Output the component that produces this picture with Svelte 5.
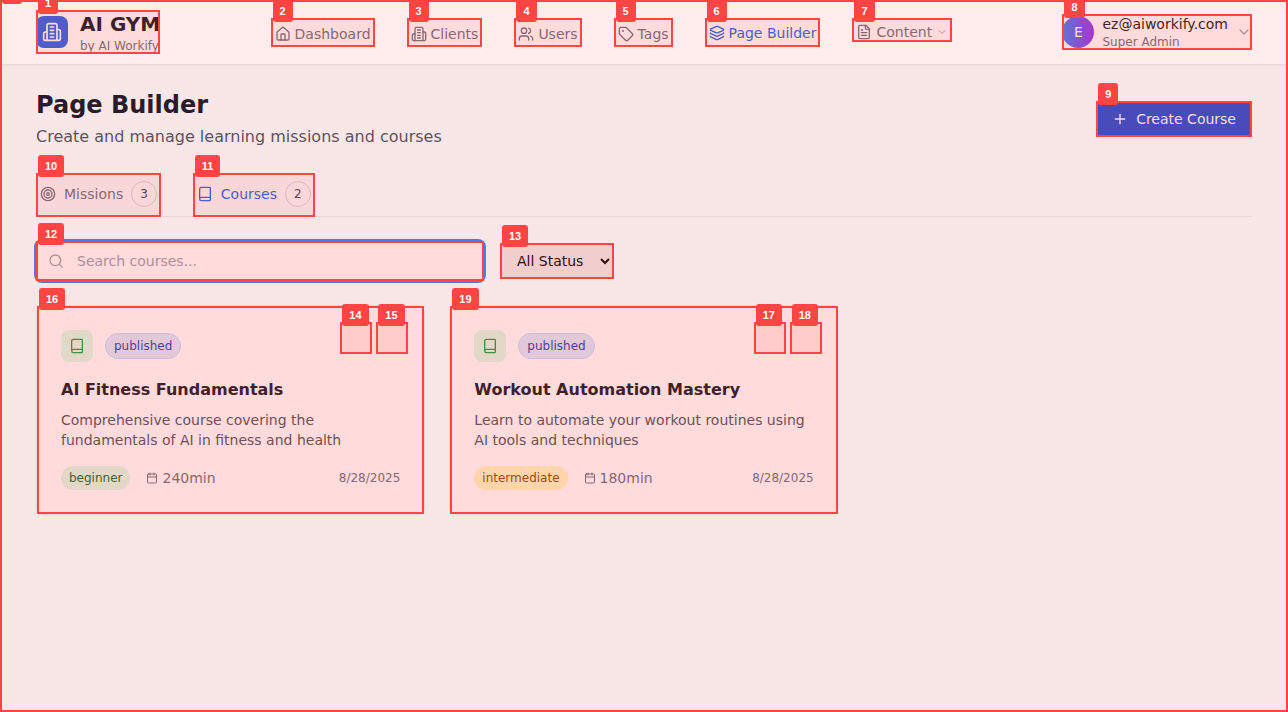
<script>
  const icons = {
    building: ['M6 22V4a2 2 0 0 1 2-2h8a2 2 0 0 1 2 2v18Z', 'M6 12H4a2 2 0 0 0-2 2v6a2 2 0 0 0 2 2h2', 'M18 9h2a2 2 0 0 1 2 2v9a2 2 0 0 1-2 2h-2', 'M10 6h4', 'M10 10h4', 'M10 14h4', 'M10 18h4'],
    home: ['M15 21v-8a1 1 0 0 0-1-1h-4a1 1 0 0 0-1 1v8', 'M3 10a2 2 0 0 1 .709-1.528l7-5.999a2 2 0 0 1 2.582 0l7 5.999A2 2 0 0 1 21 10v9a2 2 0 0 1-2 2H5a2 2 0 0 1-2-2z'],
    users: ['M16 21v-2a4 4 0 0 0-4-4H6a4 4 0 0 0-4 4v2', 'M5 7a4 4 0 1 0 8 0a4 4 0 1 0-8 0', 'M22 21v-2a4 4 0 0 0-3-3.87', 'M16 3.13a4 4 0 0 1 0 7.75'],
    tag: ['M12.586 2.586A2 2 0 0 0 11.172 2H4a2 2 0 0 0-2 2v7.172a2 2 0 0 0 .586 1.414l8.704 8.704a2.426 2.426 0 0 0 3.42 0l6.58-6.58a2.426 2.426 0 0 0 0-3.42z', 'M7 7.5a.5.5 0 1 0 1 0a.5.5 0 1 0-1 0'],
    layers: ['M12.83 2.18a2 2 0 0 0-1.66 0L2.6 6.08a1 1 0 0 0 0 1.83l8.58 3.91a2 2 0 0 0 1.66 0l8.58-3.9a1 1 0 0 0 0-1.83Z', 'M2 12a1 1 0 0 0 .58.91l8.6 3.91a2 2 0 0 0 1.65 0l8.58-3.9A1 1 0 0 0 22 12', 'M2 17a1 1 0 0 0 .58.91l8.6 3.91a2 2 0 0 0 1.65 0l8.58-3.9A1 1 0 0 0 22 17'],
    file: ['M15 2H6a2 2 0 0 0-2 2v16a2 2 0 0 0 2 2h12a2 2 0 0 0 2-2V7Z', 'M14 2v4a2 2 0 0 0 2 2h4', 'M10 9H8', 'M16 13H8', 'M16 17H8'],
    chevron: ['m6 9 6 6 6-6'],
    plus: ['M5 12h14', 'M12 5v14'],
    target: ['M2 12a10 10 0 1 0 20 0a10 10 0 1 0-20 0', 'M6 12a6 6 0 1 0 12 0a6 6 0 1 0-12 0', 'M10 12a2 2 0 1 0 4 0a2 2 0 1 0-4 0'],
    book: ['M4 19.5v-15A2.5 2.5 0 0 1 6.5 2H19a1 1 0 0 1 1 1v18a1 1 0 0 1-1 1H6.5a1 1 0 0 1 0-5H20'],
    search: ['M3 11a8 8 0 1 0 16 0a8 8 0 1 0-16 0', 'm21 21-4.3-4.3'],
    calendar: ['M8 2v4', 'M16 2v4', 'M5 4h14a2 2 0 0 1 2 2v14a2 2 0 0 1-2 2H5a2 2 0 0 1-2-2V6a2 2 0 0 1 2-2z', 'M3 10h18']
  };

  const links = [
    { id: 2, label: 'Dashboard', icon: 'home' },
    { id: 3, label: 'Clients', icon: 'building' },
    { id: 4, label: 'Users', icon: 'users' },
    { id: 5, label: 'Tags', icon: 'tag' },
    { id: 6, label: 'Page Builder', icon: 'layers', active: true }
  ];

  const courses = [
    {
      id: 16, edit: 14, remove: 15,
      title: 'AI Fitness Fundamentals',
      text: 'Comprehensive course covering the fundamentals of AI in fitness and health',
      level: 'beginner', duration: '240min', date: '8/28/2025'
    },
    {
      id: 19, edit: 17, remove: 18,
      title: 'Workout Automation Mastery',
      text: 'Learn to automate your workout routines using AI tools and techniques',
      level: 'intermediate', duration: '180min', date: '8/28/2025'
    }
  ];

  let tab = $state('Courses');
  const tabs = [
    { id: 10, label: 'Missions', icon: 'target', count: 3 },
    { id: 11, label: 'Courses', icon: 'book', count: 2 }
  ];
</script>

{#snippet icon(name, size = 16)}
  <svg width={size} height={size} viewBox="0 0 24 24" aria-hidden="true">
    {#each icons[name] as d}<path {d} />{/each}
  </svg>
{/snippet}

{#snippet mark(id)}
  <span class="mark" aria-hidden="true"><span class="tag">{id}</span></span>
{/snippet}

<div class="page">
  <header>
    <a class="brand marked" href="#home">
      <span class="logo">{@render icon('building', 20)}</span>
      <span class="stack">
        <span class="name">AI GYM</span>
        <span class="small">by AI Workify</span>
      </span>
      {@render mark(1)}
    </a>
    <nav>
      {#each links as link}
        <a class="link marked" class:active={link.active} href="#{link.icon}">
          {@render icon(link.icon)}{link.label}
          {@render mark(link.id)}
        </a>
      {/each}
      <button class="content marked">
        {@render icon('file')}Content<span class="faint">{@render icon('chevron', 12)}</span>
        {@render mark(7)}
      </button>
    </nav>
    <button class="user marked">
      <span class="avatar">E</span>
      <span class="stack">
        <span class="email">ez@aiworkify.com</span>
        <span class="small">Super Admin</span>
      </span>
      <span class="faint">{@render icon('chevron')}</span>
      {@render mark(8)}
    </button>
  </header>

  <main>
    <div class="heading">
      <div>
        <h1>Page Builder</h1>
        <p>Create and manage learning missions and courses</p>
      </div>
      <button class="create marked">
        {@render icon('plus')}Create Course
        {@render mark(9)}
      </button>
    </div>

    <div class="tabs">
      {#each tabs as t}
        <button class="tab marked" class:active={tab === t.label} onclick={() => (tab = t.label)}>
          {@render icon(t.icon)}{t.label}<span class="count">{t.count}</span>
          {@render mark(t.id)}
        </button>
      {/each}
    </div>

    <div class="filters">
      <div class="search marked">
        <label for="search" aria-label="Search courses">{@render icon('search')}</label>
        <input id="search" type="text" placeholder="Search courses..." />
        {@render mark(12)}
      </div>
      <div class="status marked">
        <select aria-label="Status">
          <option>All Status</option>
        </select>
        {@render mark(13)}
      </div>
    </div>

    <div class="grid">
      {#each courses as c}
        <article class="marked">
          <div class="row">
            <span class="cover">{@render icon('book')}</span>
            <span class="state">published</span>
          </div>
          <h2>{c.title}</h2>
          <p>{c.text}</p>
          <div class="foot">
            <span class="level {c.level}">{c.level}</span>
            <span class="time">{@render icon('calendar', 12)}{c.duration}</span>
            <span class="date">{c.date}</span>
          </div>
          {@render mark(c.id)}
          <div class="actions">
            <button class="marked" aria-label="Edit">{@render mark(c.edit)}</button>
            <button class="marked" aria-label="Delete">{@render mark(c.remove)}</button>
          </div>
        </article>
      {/each}
    </div>
  </main>
  {@render mark(0)}
</div>

<style>
  :global(body) {
    margin: 0;
  }
  .page {
    position: relative;
    min-height: 100vh;
    background: #f9fafb;
    color: #111827;
    font-family: "DejaVu Sans", sans-serif;
    font-size: 14px;
    line-height: 20px;
  }
  .page, .page * {
    box-sizing: border-box;
  }
  svg {
    display: block;
    flex: none;
    fill: none;
    stroke: currentColor;
    stroke-width: 2;
    stroke-linecap: round;
    stroke-linejoin: round;
  }
  button, input, select {
    font: inherit;
    margin: 0;
  }
  button {
    border: 0;
    padding: 0;
    background: none;
    color: inherit;
    text-align: left;
    cursor: pointer;
  }
  a {
    color: inherit;
    text-decoration: none;
  }
  h1, h2, p {
    margin: 0;
  }

  /* numbered overlay drawn over each interactive element */
  .marked {
    position: relative;
  }
  .mark {
    position: absolute;
    inset: 0;
    z-index: 2;
    border: 2px solid #ff4444;
    background: rgba(255, 68, 68, 0.1);
    pointer-events: none;
  }
  .page > .mark {
    z-index: 1;
  }
  .tag {
    position: absolute;
    top: -20px;
    left: 0;
    padding: 0 7px;
    border-radius: 3px;
    background: #ff4444;
    color: #fff;
    font: bold 11px/22px "Liberation Sans", Arial, sans-serif;
  }

  header {
    display: flex;
    align-items: center;
    justify-content: space-between;
    height: 65px;
    padding: 0 36px;
    border-bottom: 1px solid #e5e7eb;
    background: #fff;
    box-shadow: 0 1px 2px rgba(0, 0, 0, 0.05);
  }
  .brand {
    display: flex;
    align-items: center;
    gap: 12px;
  }
  .logo {
    display: grid;
    place-items: center;
    width: 32px;
    height: 32px;
    border-radius: 8px;
    background: #2563eb;
    color: #fff;
  }
  .stack {
    display: flex;
    flex-direction: column;
  }
  .name {
    font-size: 20px;
    font-weight: bold;
    line-height: 28px;
  }
  .small {
    color: #6b7280;
    font-size: 12px;
    line-height: 16px;
  }
  nav {
    display: flex;
    align-items: flex-start;
    gap: 32px;
    color: #6b7280;
  }
  .link, .content {
    display: flex;
    align-items: center;
    gap: 4px;
    padding: 6px 4px 3px;
  }
  .link.active {
    padding: 5px 4px 4px;
    color: #2563eb;
  }
  .content {
    padding: 6px 4px 2px;
    line-height: 16px;
  }
  .faint {
    color: #9ca3af;
  }
  .user {
    display: flex;
    align-items: center;
    gap: 8px;
  }
  .avatar {
    display: grid;
    place-items: center;
    width: 32px;
    height: 32px;
    border-radius: 50%;
    background: linear-gradient(to right, #3b82f6, #9333ea);
    color: #fff;
  }

  main {
    padding: 24px 36px;
  }
  .heading {
    display: flex;
    align-items: center;
    justify-content: space-between;
    margin-bottom: 24px;
  }
  h1 {
    margin-bottom: 4px;
    font-size: 24px;
    line-height: 32px;
  }
  .heading p {
    color: #4b5563;
    font-size: 16px;
    line-height: 24px;
  }
  .create {
    display: flex;
    align-items: center;
    gap: 8px;
    padding: 8px 16px;
    background: #1d4ed8;
    color: #fff;
  }
  .tabs {
    display: flex;
    gap: 32px;
    box-shadow: inset 0 -1px #e5e7eb;
  }
  .tab {
    display: flex;
    align-items: center;
    gap: 8px;
    padding: 8px 4px;
    border-bottom: 2px solid transparent;
    color: #6b7280;
  }
  .tab.active {
    border-color: #2563eb;
    color: #2563eb;
  }
  .tab > .mark {
    bottom: -2px;
  }
  .count {
    padding: 0 8px;
    border: 1px solid #d1d5db;
    border-radius: 13px;
    color: #374151;
    font-size: 12px;
    line-height: 24px;
  }
  .filters {
    display: flex;
    align-items: center;
    gap: 16px;
    margin: 24px 0;
  }
  .search {
    flex: 0 1 448px;
    display: flex;
    align-items: center;
    gap: 13px;
    height: 40px;
    padding: 0 12px;
    border-radius: 6px;
    background: #fff;
    box-shadow: 0 0 0 2px #3b82f6;
    color: #9ca3af;
  }
  .search input {
    flex: 1;
    min-width: 0;
    padding: 0;
    border: 0;
    outline: 0;
    background: none;
    color: #111827;
  }
  .search input::placeholder {
    color: #9ca3af;
  }
  select {
    display: block;
    height: 36px;
    padding: 0 13px 0 12px;
    border: 1px solid #d1d5db;
    background: #efefef;
    color: #000;
  }

  .grid {
    display: grid;
    grid-template-columns: repeat(3, 1fr);
    gap: 24px;
  }
  article {
    padding: 24px;
    border: 1px solid #e5e7eb;
    border-radius: 8px;
    background: #fff;
    box-shadow: 0 1px 2px rgba(0, 0, 0, 0.05);
  }
  .row {
    display: flex;
    align-items: center;
    gap: 12px;
  }
  .cover {
    display: grid;
    place-items: center;
    width: 32px;
    height: 32px;
    border-radius: 8px;
    background: #dcfce7;
    color: #16a34a;
  }
  .state {
    padding: 4px 8px;
    border: 1px solid #bfdbfe;
    border-radius: 13px;
    background: #dbeafe;
    color: #1e40af;
    font-size: 12px;
    line-height: 16px;
  }
  h2 {
    margin: 16px 0 8px;
    font-size: 16px;
    line-height: 24px;
  }
  article p {
    color: #4b5563;
  }
  .foot {
    display: flex;
    align-items: center;
    gap: 16px;
    margin-top: 16px;
    color: #6b7280;
  }
  .level {
    padding: 4px 8px;
    border-radius: 12px;
    font-size: 12px;
    line-height: 16px;
  }
  .beginner {
    background: #dcfce7;
    color: #166534;
  }
  .intermediate {
    background: #fef9c3;
    color: #854d0e;
  }
  .time {
    display: flex;
    align-items: center;
    gap: 4px;
  }
  .date {
    margin-left: auto;
    font-size: 12px;
  }
  .actions {
    position: absolute;
    top: 16px;
    right: 16px;
    z-index: 3;
    display: flex;
    gap: 4px;
  }
  .actions button {
    width: 32px;
    height: 32px;
  }
</style>
